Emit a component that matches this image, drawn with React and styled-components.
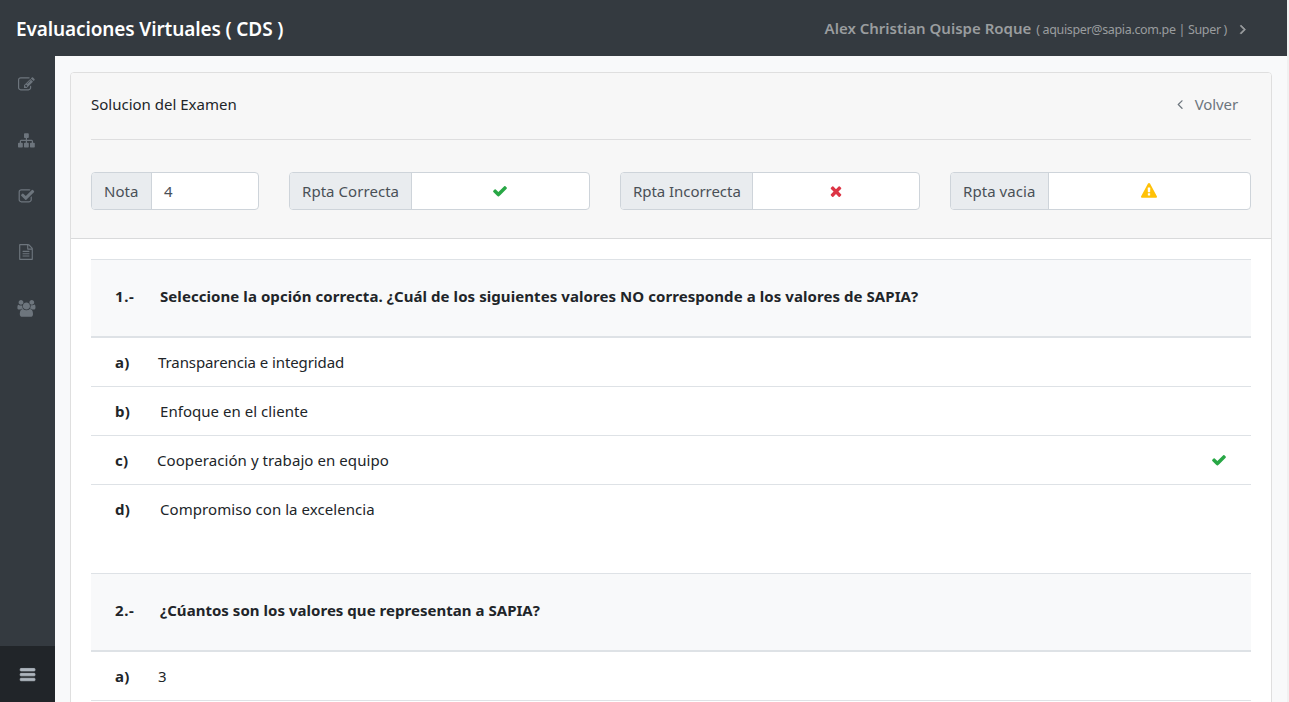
import React from 'react';
import styled, { createGlobalStyle } from 'styled-components';

const GlobalStyle = createGlobalStyle`
  *, *::before, *::after { box-sizing: border-box; }
  body {
    margin: 0;
    height: 702px;
    overflow: hidden;
    background: #f8f9fa;
    color: #212529;
    font: 400 15px/24px "Noto Sans", "Open Sans", sans-serif;
  }
`;

const PATHS = {
  edit: 'M888 1184l116-116-152-152-116 116v56h96v96h56zm440-720q-16-16-33 1l-350 350q-17 17-1 33t33-1l350-350q17-17 1-33zm80 594v190q0 119-84.5 203.5t-203.5 84.5h-832q-119 0-203.5-84.5t-84.5-203.5v-832q0-119 84.5-203.5t203.5-84.5h832q63 0 117 25 15 7 18 23 3 17-9 29l-49 49q-14 14-32 8-23-6-45-6h-832q-66 0-113 47t-47 113v832q0 66 47 113t113 47h832q66 0 113-47t47-113v-126q0-13 9-22l64-64q15-15 35-7t20 29zm-96-738l288 288-672 672h-288v-288zm444 132l-92 92-288-288 92-92q28-28 68-28t68 28l152 152q28 28 28 68t-28 68z',
  sitemap: 'M1792 1248v320q0 40-28 68t-68 28h-320q-40 0-68-28t-28-68v-320q0-40 28-68t68-28h96v-192h-512v192h96q40 0 68 28t28 68v320q0 40-28 68t-68 28h-320q-40 0-68-28t-28-68v-320q0-40 28-68t68-28h96v-192h-512v192h96q40 0 68 28t28 68v320q0 40-28 68t-68 28h-320q-40 0-68-28t-28-68v-320q0-40 28-68t68-28h96v-192q0-52 38-90t90-38h512v-192h-96q-40 0-68-28t-28-68v-320q0-40 28-68t68-28h320q40 0 68 28t28 68v320q0 40-28 68t-68 28h-96v192h512q52 0 90 38t38 90v192h96q40 0 68 28t28 68z',
  checkSquare: 'M1472 930v318q0 119-84.5 203.5t-203.5 84.5h-832q-119 0-203.5-84.5t-84.5-203.5v-832q0-119 84.5-203.5t203.5-84.5h832q63 0 117 25 15 7 18 23 3 17-9 29l-49 49q-10 10-23 10-3 0-9-2-23-6-45-6h-832q-66 0-113 47t-47 113v832q0 66 47 113t113 47h832q66 0 113-47t47-113v-254q0-13 9-22l64-64q10-10 23-10 6 0 12 3 20 8 20 29zm231-489l-814 814q-24 24-57 24t-57-24l-430-430q-24-24-24-57t24-57l110-110q24-24 57-24t57 24l263 263 647-647q24-24 57-24t57 24l110 110q24 24 24 57t-24 57z',
  file: 'M1596 380q28 28 48 76t20 88v1152q0 40-28 68t-68 28h-1344q-40 0-68-28t-28-68v-1600q0-40 28-68t68-28h896q40 0 88 20t76 48zm-444-244v376h376q-10-29-22-41l-313-313q-12-12-41-22zm384 1528v-1024h-416q-40 0-68-28t-28-68v-416h-768v1536h1280zm-1024-864q0-14 9-23t23-9h704q14 0 23 9t9 23v64q0 14-9 23t-23 9h-704q-14 0-23-9t-9-23v-64zm736 224q14 0 23 9t9 23v64q0 14-9 23t-23 9h-704q-14 0-23-9t-9-23v-64q0-14 9-23t23-9h704zm0 256q14 0 23 9t9 23v64q0 14-9 23t-23 9h-704q-14 0-23-9t-9-23v-64q0-14 9-23t23-9h704z',
  users: 'M529 896q-162 5-265 128h-134q-82 0-138-40.5t-56-118.5q0-353 124-353 6 0 43.5 21t97.5 42.5 119 21.5q67 0 133-23-5 37-5 66 0 159 93 292zm1071 637q0 120-73 189.5t-194 69.5h-874q-121 0-194-69.5t-73-189.5q0-53 3.5-103.5t14-109 26.5-108.5 43-97.5 62-81 85.5-53.5 111.5-20q10 0 43 21.5t73 48 107 48 135 21.5 135-21.5 107-48 73-48 43-21.5q61 0 111.5 20t85.5 53.5 62 81 43 97.5 26.5 108.5 14 109 3.5 103.5zm-1024-1277q0 106-75 181t-181 75-181-75-75-181 75-181 181-75 181 75 75 181zm704 384q0 159-112.5 271.5t-271.5 112.5-271.5-112.5-112.5-271.5 112.5-271.5 271.5-112.5 271.5 112.5 112.5 271.5zm576 225q0 78-56 118.5t-138 40.5h-134q-103-123-265-128 93-133 93-292 0-29-5-66 66 23 133 23 59 0 119-21.5t97.5-42.5 43.5-21q124 0 124 353zm-128-609q0 106-75 181t-181 75-181-75-75-181 75-181 181-75 181 75 75 181z',
  bars: 'M1664 1344v128q0 26-19 45t-45 19h-1408q-26 0-45-19t-19-45v-128q0-26 19-45t45-19h1408q26 0 45 19t19 45zm0-512v128q0 26-19 45t-45 19h-1408q-26 0-45-19t-19-45v-128q0-26 19-45t45-19h1408q26 0 45 19t19 45zm0-512v128q0 26-19 45t-45 19h-1408q-26 0-45-19t-19-45v-128q0-26 19-45t45-19h1408q26 0 45 19t19 45z',
  angleRight: 'M1171 960q0 13-10 23l-466 466q-10 10-23 10t-23-10l-50-50q-10-10-10-23t10-23l393-393-393-393q-10-10-10-23t10-23l50-50q10-10 23-10t23 10l466 466q10 10 10 23z',
  angleLeft: 'M1203 544q0 13-10 23l-393 393 393 393q10 10 10 23t-10 23l-50 50q-10 10-23 10t-23-10l-466-466q-10-10-10-23t10-23l466-466q10-10 23-10t23 10l50 50q10 10 10 23z',
  check: 'M1671 566q0 40-28 68l-724 724-136 136q-28 28-68 28t-68-28l-136-136-362-362q-28-28-28-68t28-68l136-136q28-28 68-28t68 28l294 295 656-657q28-28 68-28t68 28l136 136q28 28 28 68z',
  times: 'M1490 1322q0 40-28 68l-136 136q-28 28-68 28t-68-28l-294-294-294 294q-28 28-68 28t-68-28l-136-136q-28-28-28-68t28-68l294-294-294-294q-28-28-28-68t28-68l136-136q28-28 68-28t68 28l294 294 294-294q28-28 68-28t68 28l136 136q28 28 28 68t-28 68l-294 294 294 294q28 28 28 68z',
  warning: 'M1024 1375v-190q0-14-9.5-23.5t-22.5-9.5h-192q-13 0-22.5 9.5t-9.5 23.5v190q0 14 9.5 23.5t22.5 9.5h192q13 0 22.5-9.5t9.5-23.5zm-2-374l18-459q0-12-10-19-13-11-24-11h-220q-11 0-24 11-10 7-10 21l17 457q0 10 10 16.5t24 6.5h185q14 0 23.5-6.5t10.5-16.5zm-14-934l768 1408q35 63-2 126-17 29-46.5 46t-63.5 17h-1536q-34 0-63.5-17t-46.5-46q-37-63-2-126l768-1408q17-31 47-49t65-18 65 18 47 49z',
};

const Svg = styled.svg`
  display: block;
  flex: none;
  width: ${(p) => p.$size}px;
  height: ${(p) => p.$size}px;
  overflow: visible;
  fill: ${(p) => p.$color || 'currentColor'};
  stroke: ${(p) => p.$color || 'currentColor'};
  stroke-width: ${(p) => p.$stroke || 0};
`;

const Icon = ({ name, size = 16, color, stroke }) => (
  <Svg viewBox="0 0 1792 1792" $size={size} $color={color} $stroke={stroke} aria-hidden="true">
    <path d={PATHS[name]} />
  </Svg>
);

const Page = styled.div`
  display: flex;
  flex-direction: column;
  height: 702px;
  border-right: 2px solid #f1f1f1;
`;

const TopBar = styled.header`
  flex: none;
  display: flex;
  justify-content: space-between;
  height: 56px;
  padding: 0 36px 0 16px;
  background: #343a40;
`;

const Brand = styled.h1`
  margin: 0;
  font-size: 19px;
  line-height: 58px;
  font-weight: 600;
  letter-spacing: -0.12px;
  color: #fff;
  white-space: nowrap;
`;

const UserMenu = styled.div`
  display: flex;
  align-items: center;
  height: 58px;
  color: #9a9d9f;
  white-space: nowrap;
`;

const UserName = styled.strong`
  font-size: 15px;
  font-weight: 600;
  line-height: 56px;
  height: 58px;
`;

const UserMeta = styled.span`
  margin: 1px 8px 0 5px;
  font-size: 12.5px;
  letter-spacing: -0.35px;
`;

const Body = styled.div`
  flex: 1;
  display: flex;
  min-height: 0;
`;

const Sidebar = styled.nav`
  flex: none;
  display: flex;
  flex-direction: column;
  width: 55px;
  background: #343a40;
  color: #6d757d;
`;

const NavItem = styled.a`
  display: flex;
  align-items: center;
  height: 56px;
  padding-left: 18px;
`;

const SidebarToggle = styled(NavItem)`
  margin-top: auto;
  padding: 1px 0 0 19px;
  background: #212529;
  color: #adb5bd;
`;

const Main = styled.main`
  flex: 1;
  min-width: 0;
  padding: 16px 15px 0;
  overflow: hidden;
`;

const Card = styled.section`
  height: 800px;
  background: #fff;
  border: 1px solid #dfdfdf;
  border-radius: 4px;
`;

const CardHeader = styled.header`
  height: 166px;
  padding: 19px 20px 0;
  background: #f7f7f7;
  border-bottom: 1px solid #d9dadb;
  border-radius: 3px 3px 0 0;
`;

const TitleRow = styled.div`
  display: flex;
  justify-content: space-between;
  height: 48px;
  border-bottom: 1px solid #dededf;
`;

const Title = styled.span`
  line-height: 24px;
  letter-spacing: ${(p) => p.$track || 0}px;
`;

const BackLink = styled.a`
  display: flex;
  align-items: center;
  gap: 7px;
  height: 24px;
  margin-right: 13px;
  color: #6c757d;
`;

const Scores = styled.div`
  display: grid;
  grid-template-columns: 168px 301px 300px 301px;
  gap: 30px;
  margin-top: 32px;
`;

const InputGroup = styled.div`
  display: flex;
  height: 38px;
  background: #fff;
  border: 1px solid #ced4da;
  border-radius: 4px;
  color: #495057;
  line-height: 37px;
  overflow: hidden;
`;

const Addon = styled.span`
  flex: none;
  width: ${(p) => p.$width}px;
  padding-left: 12px;
  background: #e9ecef;
  border-right: 1px solid #ced4da;
  letter-spacing: ${(p) => p.$track}px;
  white-space: nowrap;
`;

const Value = styled.span`
  flex: 1;
  display: flex;
  align-items: center;
  justify-content: ${(p) => (p.$center ? 'center' : 'flex-start')};
  padding: ${(p) => (p.$center ? '0 13px 0 12px' : '0 12px')};
`;

const CardBody = styled.div`
  padding: 20px;
`;

const Question = styled.article`
  height: 314px;
`;

const QuestionHead = styled.h2`
  display: flex;
  height: 79px;
  margin: 0;
  padding: 24px 24px 0;
  background: #f8f9fa;
  border-top: 1px solid #dee2e6;
  border-bottom: 2px solid #dee2e6;
  font-size: 15px;
  line-height: 24px;
  font-weight: 700;
  white-space: nowrap;
`;

const Num = styled.span`
  flex: none;
  width: 45px;
  letter-spacing: 0.6px;
`;

const Text = styled.span`
  letter-spacing: ${(p) => p.$track || 0}px;
`;

const Option = styled.div`
  display: flex;
  align-items: center;
  height: 49px;
  padding: 0 24px;
  border-bottom: 1px solid ${(p) => (p.$last ? 'transparent' : '#dee2e6')};
`;

const Letter = styled.strong`
  flex: none;
  width: ${(p) => p.$width}px;
  letter-spacing: 0.3px;
`;

const Mark = styled.span`
  margin-left: auto;
`;

const NAV = ['edit', 'sitemap', 'checkSquare', 'file', 'users'];

const SCORES = [
  { label: 'Nota', width: 60, track: 0, value: '4' },
  { label: 'Rpta Correcta', width: 122, track: 0.05, icon: 'check', color: '#28a745' },
  { label: 'Rpta Incorrecta', width: 132, track: -0.05, icon: 'times', color: '#dc3545' },
  { label: 'Rpta vacia', width: 98, track: 0.06, icon: 'warning', color: '#ffc107' },
];

const QUESTIONS = [
  {
    num: '1.-',
    text: 'Seleccione la opción correcta. ¿Cuál de los siguientes valores NO corresponde a los valores de SAPIA?',
    track: 0.07,
    options: [
      { letter: 'a)', indent: 43, text: 'Transparencia e integridad', track: -0.09 },
      { letter: 'b)', indent: 45, text: 'Enfoque en el cliente', track: 0.04 },
      { letter: 'c)', indent: 42, text: 'Cooperación y trabajo en equipo', track: 0.08, correct: true },
      { letter: 'd)', indent: 45, text: 'Compromiso con la excelencia', track: 0.06 },
    ],
  },
  {
    num: '2.-',
    text: '¿Cúantos son los valores que representan a SAPIA?',
    track: 0.03,
    options: [{ letter: 'a)', indent: 43, text: '3', track: 0 }],
  },
];

export default function App() {
  return (
    <Page>
      <GlobalStyle />
      <TopBar>
        <Brand>Evaluaciones Virtuales ( CDS )</Brand>
        <UserMenu>
          <UserName>Alex Christian Quispe Roque</UserName>
          <UserMeta>( aquisper@sapia.com.pe | Super )</UserMeta>
          <Icon name="angleRight" stroke={80} />
        </UserMenu>
      </TopBar>
      <Body>
        <Sidebar>
          {NAV.map((name) => (
            <NavItem key={name}>
              <Icon name={name} size={name === 'file' ? 16 : 16.8} />
            </NavItem>
          ))}
          <SidebarToggle>
            <Icon name="bars" size={17.2} stroke={90} />
          </SidebarToggle>
        </Sidebar>
        <Main>
          <Card>
            <CardHeader>
              <TitleRow>
                <Title>Solucion del Examen</Title>
                <BackLink>
                  <Icon name="angleLeft" />
                  <Title $track={-0.1}>Volver</Title>
                </BackLink>
              </TitleRow>
              <Scores>
                {SCORES.map((s) => (
                  <InputGroup key={s.label}>
                    <Addon $width={s.width} $track={s.track}>{s.label}</Addon>
                    <Value $center={!!s.icon}>
                      {s.icon ? <Icon name={s.icon} color={s.color} /> : s.value}
                    </Value>
                  </InputGroup>
                ))}
              </Scores>
            </CardHeader>
            <CardBody>
              {QUESTIONS.map((q) => (
                <Question key={q.num}>
                  <QuestionHead>
                    <Num>{q.num}</Num>
                    <Text $track={q.track}>{q.text}</Text>
                  </QuestionHead>
                  {q.options.map((o) => (
                    <Option key={o.letter} $last={o.letter === 'd)'}>
                      <Letter $width={o.indent}>{o.letter}</Letter>
                      <Text $track={o.track}>{o.text}</Text>
                      {o.correct && (
                        <Mark>
                          <Icon name="check" color="#28a745" />
                        </Mark>
                      )}
                    </Option>
                  ))}
                </Question>
              ))}
            </CardBody>
          </Card>
        </Main>
      </Body>
    </Page>
  );
}
